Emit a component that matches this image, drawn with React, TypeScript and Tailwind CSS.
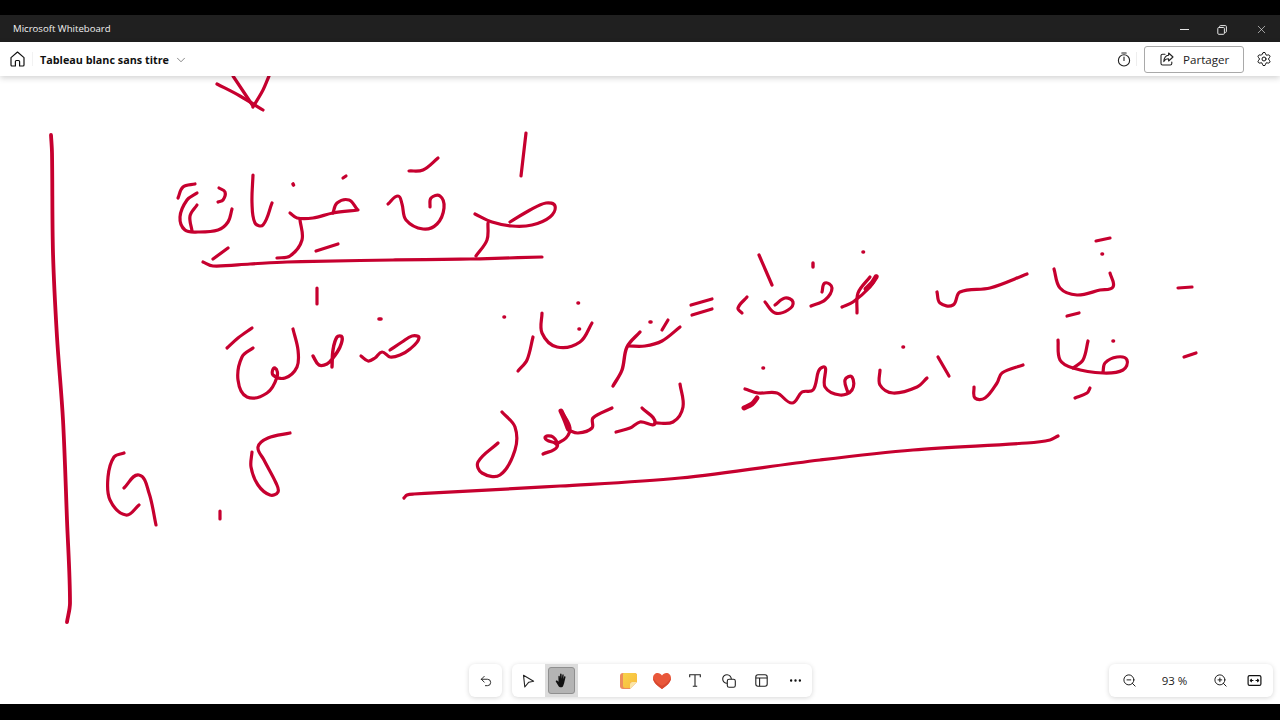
import { ChevronDown, MoreHorizontal, Settings, Undo2, X, ZoomIn, ZoomOut } from 'lucide-react';

type Stroke = { w?: number; p: number[] };

// ink strokes of the board, as point lists in page pixels (canvas starts at y=76)
const strokes: Stroke[] = [
  // arrow tip cut by the header
  { p: [217, 84, 240, 96, 263, 110] },
  { p: [233, 76, 243, 91, 253, 106] },
  { p: [269, 76, 263, 90, 253, 107] },
  // long vertical rule
  { w: 3.8, p: [51, 135, 52, 153, 53, 253, 57, 337, 63, 420, 67, 520, 70, 603, 67, 622] },
  // first heading
  { p: [526, 133, 521, 176] },
  { p: [475, 214, 492, 222, 512, 226, 532, 225, 550, 217, 555, 206, 546, 203, 530, 210, 510, 222] },
  { p: [488, 223, 487, 240, 476, 256] },
  { p: [409, 171, 423, 170, 438, 158] },
  { p: [388, 204, 398, 196, 402, 204, 406, 220, 423, 229, 437, 224, 444, 208, 440, 196, 431, 198, 430, 207] },
  { w: 3.2, p: [343, 178, 346, 176] },
  { p: [290, 213, 297, 218, 313, 218, 333, 213, 358, 210] },
  { p: [333, 213, 337, 203, 349, 200, 357, 209] },
  { p: [300, 220, 302, 240, 290, 256, 277, 258] },
  { p: [316, 251, 338, 244] },
  { w: 3.6, p: [293, 184, 293.5, 185] },
  { p: [253, 175, 252, 203, 255, 223, 263, 225, 272, 203] },
  { p: [218, 202, 223, 200, 225, 192, 219, 188] },
  { p: [178, 198, 183, 187, 195, 184] },
  { p: [197, 193, 187, 200, 180, 217, 185, 230, 198, 232, 218, 230, 228, 222, 232, 209] },
  { p: [197, 205, 190, 216, 192, 231] },
  { p: [213, 259, 228, 248] },
  { p: [203, 262, 213, 266, 250, 264, 287, 262, 393, 260, 470, 259, 542, 257] },
  // second line, left
  { p: [317, 288, 317, 304] },
  { w: 3.6, p: [379, 319, 381, 319] },
  { p: [361, 356, 368, 361, 375, 358, 382, 352, 390, 357, 400, 355, 410, 349, 419, 338, 412, 336, 402, 342, 390, 350] },
  { w: 3.4, p: [313, 356, 319, 365, 327, 364, 333, 358, 340, 347, 342, 337, 337, 337, 333, 350, 332, 367] },
  { p: [227, 348, 238, 338, 252, 328] },
  { p: [253, 348, 242, 357, 238, 380, 247, 397, 267, 393, 277, 377, 275, 368, 273, 375, 285, 378, 297, 367, 298, 350, 293, 329] },
  { p: [542, 313, 542, 333, 557, 347, 580, 342, 592, 323] },
  { p: [533, 337, 527, 360, 518, 371] },
  { w: 3.6, p: [504, 317, 504.5, 317] },
  { w: 3.6, p: [578, 303, 578.5, 303] },
  { w: 3.6, p: [579, 329, 579.5, 329] },
  { w: 3.4, p: [640, 332, 627, 347, 622, 370, 613, 386] },
  { p: [628, 346, 645, 346, 662, 341, 680, 327] },
  { w: 3.6, p: [650, 322, 651, 322] },
  { p: [662, 330, 668, 320] },
  { p: [691, 305, 712, 299] },
  { p: [692, 315, 712, 309] },
  // second line, right
  { p: [747, 297, 738, 308, 742, 313] },
  { p: [759, 255, 772, 285] },
  { p: [765, 302, 775, 313, 788, 310, 793, 302, 785, 298, 775, 305] },
  { p: [811, 306, 825, 300, 832, 288, 825, 283, 822, 292] },
  { w: 3.4, p: [813, 263, 813, 267] },
  { w: 3.6, p: [863, 252, 863.5, 252] },
  { p: [842, 307, 853, 302, 870, 287, 877, 276] },
  { w: 5, p: [866, 289, 872, 283, 876, 277] },
  { p: [870, 277, 858, 293, 857, 313] },
  { p: [937, 292, 940, 303, 953, 305, 960, 292, 990, 288, 1027, 274] },
  { p: [1054, 269, 1060, 288, 1077, 295, 1100, 290, 1113, 287, 1110, 273] },
  { p: [1096, 241, 1110, 238] },
  { w: 3.6, p: [1102, 254, 1102.5, 254] },
  { p: [1067, 316, 1079, 313] },
  { p: [1178, 288, 1192, 287] },
  // third line
  { p: [1184, 357, 1196, 353] },
  { p: [1058, 340, 1060, 360, 1073, 368, 1103, 373, 1123, 370, 1127, 360, 1117, 357, 1105, 363, 1103, 372] },
  { p: [1088, 341, 1083, 360, 1073, 368] },
  { w: 3.6, p: [1113, 341, 1113.5, 341] },
  { p: [1075, 398, 1087, 393, 1090, 388] },
  { p: [974, 387, 975, 398, 985, 398, 997, 383, 1002, 373, 1023, 365] },
  { p: [938, 357, 949, 376] },
  { p: [880, 370, 880, 385, 893, 393, 917, 387, 927, 378] },
  { w: 3.6, p: [903, 347, 903.5, 347] },
  { w: 3.6, p: [763, 368, 763.5, 368] },
  { w: 5, p: [744, 408, 752, 404, 757, 398] },
  { p: [745, 389, 758, 393, 777, 393, 792, 403, 802, 392, 813, 390, 823, 367, 825, 387, 840, 395, 852, 390, 852, 377, 845, 380, 848, 393] },
  // second row word, lower middle
  { p: [502, 412, 515, 427, 515, 450, 500, 475, 482, 473, 478, 462, 498, 443] },
  { p: [543, 454, 557, 447, 553, 437, 545, 438, 555, 443] },
  { p: [556, 444, 566, 438, 570, 428, 562, 412] },
  { w: 5, p: [561, 411, 565, 420, 568, 428] },
  { p: [568, 430, 578, 433, 592, 428, 593, 418, 612, 408] },
  { p: [616, 432, 630, 428, 640, 422, 655, 423, 642, 408] },
  { p: [655, 423, 673, 422, 683, 407, 680, 384] },
  // grade at the bottom left
  { p: [124, 453, 114, 457, 108, 477, 110, 500, 126, 515, 139, 505] },
  { p: [124, 488, 139, 475, 149, 493, 156, 525] },
  { p: [220, 511, 220, 519] },
  { p: [290, 433, 268, 438, 258, 447, 264, 460, 276, 483, 278, 492, 270, 495, 258, 485, 251, 467, 252, 452] },
  // long underline
  { w: 3.2, p: [404, 498, 407, 495, 414, 494, 560, 486, 680, 478, 820, 460, 913, 450, 1027, 443, 1050, 440, 1058, 436] },
];

function unit(x: number, y: number): [number, number] {
  const l = Math.hypot(x, y) || 1;
  return [x / l, y / l];
}

// smooth spline through the points, handle length follows each segment so long runs don't overshoot
function toPath(p: number[]) {
  const pts: [number, number][] = [];
  for (let i = 0; i < p.length; i += 2) pts.push([p[i], p[i + 1]]);
  let d = `M${pts[0][0]},${pts[0][1]}`;
  for (let i = 0; i < pts.length - 1; i++) {
    const a = pts[Math.max(i - 1, 0)];
    const b = pts[i];
    const c = pts[i + 1];
    const e = pts[Math.min(i + 2, pts.length - 1)];
    const len = Math.hypot(c[0] - b[0], c[1] - b[1]) / 3;
    const t1 = unit(c[0] - a[0], c[1] - a[1]);
    const t2 = unit(e[0] - b[0], e[1] - b[1]);
    d += ` C${b[0] + t1[0] * len},${b[1] + t1[1] * len} ${c[0] - t2[0] * len},${c[1] - t2[1] * len} ${c[0]},${c[1]}`;
  }
  return d;
}

function Ink() {
  return (
    <svg className="absolute left-0 top-[-76px]" width="1280" height="720" viewBox="0 0 1280 720" fill="none">
      {strokes.map((s, i) => (
        <path key={i} d={toPath(s.p)} stroke="#c6002f" strokeWidth={s.w ?? 3.2} strokeLinecap="round" strokeLinejoin="round" />
      ))}
    </svg>
  );
}

function HomeIcon() {
  return (
    <svg width="15" height="16" viewBox="0 0 15 16" fill="none" stroke="#111" strokeWidth="1.2" strokeLinejoin="round">
      <path d="M1 6.6 7.5 1 14 6.6V14a1 1 0 0 1-1 1H9.6V10.5a1 1 0 0 0-1-1H6.4a1 1 0 0 0-1 1V15H2a1 1 0 0 1-1-1Z" />
    </svg>
  );
}

function TimerIcon() {
  return (
    <svg width="14" height="15" viewBox="0 0 14 15" fill="none" stroke="#222" strokeWidth="1.1" strokeLinecap="round">
      <circle cx="7" cy="8.4" r="5.6" />
      <path d="M4.8 1h4.4M7 5v3.4" />
    </svg>
  );
}

function ShareIcon() {
  return (
    <svg width="14" height="14" viewBox="0 0 14 14" fill="none" stroke="#222" strokeWidth="1.1" strokeLinecap="round" strokeLinejoin="round">
      <path d="M5 2.2H2.6A1.6 1.6 0 0 0 1 3.8v7.6A1.6 1.6 0 0 0 2.6 13h7.6a1.6 1.6 0 0 0 1.6-1.6V10" />
      <path d="M8.6 1 13 5 8.6 9V6.8C6.4 6.8 4.8 7.6 3.8 9.6 4 6.2 5.8 3.6 8.6 3.3Z" />
    </svg>
  );
}

function RestoreIcon() {
  return (
    <svg width="10" height="10" viewBox="0 0 10 10" fill="none" stroke="#e5e5e5" strokeWidth="1">
      <rect x="0.8" y="2.5" width="6.6" height="6.8" rx="1" />
      <path d="M2.6 2.4V1.6a1 1 0 0 1 1-1h4.8a1 1 0 0 1 1 1v4.8a1 1 0 0 1-1 1h-.9" />
    </svg>
  );
}

function CursorIcon() {
  return (
    <svg width="13" height="14" viewBox="0 0 13 14" fill="none" stroke="#222" strokeWidth="1.1" strokeLinejoin="round">
      <path d="M1.5 1.2 11.6 7.2 6.8 8.2 2.8 13Z" />
    </svg>
  );
}

function HandIcon() {
  return (
    <svg width="13" height="15" viewBox="0 0 13 15" fill="#111">
      <path d="M3.4 3.4c0-1 1.3-1 1.4 0l.2 2.4.1-4.5c0-1 1.4-1 1.5 0l.2 4.4.5-3.7c.2-1 1.5-.8 1.4.2l-.4 4 .8-2.4c.3-.9 1.6-.5 1.4.4l-1 4.4c-.4 2-1 3.9-1.6 4.9-.3.5-.8.7-1.3.7H5.2c-.6 0-1-.3-1.4-.7L.9 8.7c-.6-.8.4-1.7 1.2-1.1l1.4 1.2Z" />
    </svg>
  );
}

function StickyIcon() {
  return (
    <svg width="17" height="16" viewBox="0 0 17 16">
      <defs>
        <linearGradient id="stickyFill" x1="0" y1="0" x2="1" y2="1">
          <stop offset="0" stopColor="#f7d34a" />
          <stop offset="1" stopColor="#f9b93c" />
        </linearGradient>
      </defs>
      <path d="M3 0h11.5A2.500 2.500 0 0 1 17 2.500V9l-7 7H3a3 3 0 0 1-3-3V3a3 3 0 0 1 3-3Z" fill="#ec8d5c" />
      <path d="M4 0h10.5A2.500 2.500 0 0 1 17 2.500V9h-5a2 2 0 0 0-2 2v4H5a2 2 0 0 1-2-2V1a1 1 0 0 1 1-1Z" fill="url(#stickyFill)" />
      <path d="M17 9l-7 7v-4.500A2.500 2.500 0 0 1 12.5 9Z" fill="#fbe6a6" />
    </svg>
  );
}

function HeartIcon() {
  return (
    <svg width="18" height="16" viewBox="0 0 18 16">
      <path d="M9 16C4.5 12.600 0 9.200 0 4.900 0 2.100 2.100 0 4.700 0 6.400 0 8 .9 9 2.500 10 .9 11.600 0 13.300 0 15.900 0 18 2.100 18 4.900 18 9.200 13.500 12.600 9 16Z" fill="#e9573a" />
      <path d="M9 16C4.500 12.600 0 9.200 0 4.900c3 4 6 6.600 9 7.800 3-1.200 6-3.800 9-7.800 0 4.300-4.500 7.700-9 11.100Z" fill="#d8482f" />
    </svg>
  );
}

function SerifT() {
  return (
    <svg width="12" height="13" viewBox="0 0 12 13" fill="none" stroke="#222" strokeWidth="1.1">
      <path d="M.7 3.2V.7h10.600v2.500M6 .7v11.600M3.800 12.300h4.400" />
    </svg>
  );
}

function ShapesIcon() {
  return (
    <svg width="14" height="14" viewBox="0 0 14 14" fill="none" stroke="#222" strokeWidth="1.1">
      <path d="M5.200 9.300A4.300 4.300 0 1 1 9.300 5.200" />
      <rect x="5.3" y="5.3" width="8" height="8" rx="1.8" />
    </svg>
  );
}

function TemplateIcon() {
  return (
    <svg width="13" height="13" viewBox="0 0 13 13" fill="none" stroke="#222" strokeWidth="1.1">
      <rect x="0.8" y="0.8" width="11.4" height="11.4" rx="2.2" />
      <path d="M.8 4h11.400M4.600 4v8.200" />
    </svg>
  );
}

function FitIcon() {
  return (
    <svg width="15" height="11" viewBox="0 0 14 11" fill="none" stroke="#111" strokeWidth="1.2" strokeLinecap="round" strokeLinejoin="round">
      <rect x="0.6" y="0.6" width="12.8" height="9.8" rx="1.5" />
      <path d="M3 5.500h2.500M3.900 4.300 2.900 5.500l1 1.200M11 5.500H8.500M10.100 4.300l1 1.200-1 1.200" />
    </svg>
  );
}

function ToolSlot({ children }: { children?: React.ReactNode }) {
  return <div className="flex h-[33px] w-[33.33px] items-center justify-center">{children}</div>;
}

export default function App() {
  return (
    <div className="flex h-[720px] w-[1280px] flex-col overflow-hidden bg-white font-['Open_Sans','Noto_Sans',sans-serif]">
      <div className="h-[15px] bg-black" />

      {/* window title bar */}
      <div className="flex h-[27px] items-center bg-[#202020] pl-[13px] text-[9.6px] text-[#f0f0f0]">
        <span className="pt-[2px]">Microsoft Whiteboard</span>
        <div className="ml-auto flex items-center pt-[2px]">
          <div className="mr-[28px] h-px w-[9px] bg-[#e5e5e5]" />
          <div className="mr-[28px]"><RestoreIcon /></div>
          <div className="mr-[12px]"><X size={13} color="#e5e5e5" strokeWidth={1.2} /></div>
        </div>
      </div>

      {/* app header */}
      <div className="relative z-10 flex h-[34px] items-center bg-white pl-[10px] shadow-[0_2px_6px_rgba(0,0,0,0.18)]">
        <HomeIcon />
        <div className="ml-[7px] h-[14px] w-px bg-[#f2f2f2]" />
        <span className="ml-[7px] pt-[2px] text-[10.8px] font-bold text-[#111]">Tableau blanc sans titre</span>
        <ChevronDown className="ml-[5px] mt-[1px]" size={14} color="#555" strokeWidth={1.2} />
        <div className="ml-auto flex items-center">
          <TimerIcon />
          <div className="ml-[5px] h-[14px] w-px bg-[#eeeeee]" />
          <button className="ml-[7px] flex h-[27px] w-[100px] items-center rounded-[3px] border border-[#a9a9a9] pl-[15px] text-[11.6px] text-[#222]">
            <ShareIcon />
            <span className="ml-[9px] pt-[2px]">Partager</span>
          </button>
          <Settings className="ml-[12px] mr-[8px]" size={16} color="#111" strokeWidth={1.5} />
        </div>
      </div>

      {/* board */}
      <div className="relative flex-1 bg-white">
        <Ink />
        <div className="absolute bottom-[7px] left-[469px] flex items-end">
          <div className="flex h-[33px] w-[33px] items-center justify-center rounded-[6px] bg-white shadow-[0_1px_5px_rgba(0,0,0,0.16)]">
            <Undo2 size={14} color="#111" strokeWidth={1.5} />
          </div>
          <div className="ml-[10px] flex h-[33px] w-[300px] items-center rounded-[6px] bg-white shadow-[0_1px_5px_rgba(0,0,0,0.16)]">
            <ToolSlot><CursorIcon /></ToolSlot>
            <ToolSlot>
              <div className="flex h-[33px] w-[33px] items-center justify-center bg-[#dcdcdc]">
                <div className="flex h-[27px] w-[27px] items-center justify-center rounded-[3px] border border-[#8f8f8f] bg-[#b4b4b4]">
                  <HandIcon />
                </div>
              </div>
            </ToolSlot>
            <ToolSlot />
            <ToolSlot><StickyIcon /></ToolSlot>
            <ToolSlot><HeartIcon /></ToolSlot>
            <ToolSlot><SerifT /></ToolSlot>
            <ToolSlot><ShapesIcon /></ToolSlot>
            <ToolSlot><TemplateIcon /></ToolSlot>
            <ToolSlot><MoreHorizontal size={15} color="#111" strokeWidth={1.8} /></ToolSlot>
          </div>
          <div className="ml-[297px] flex h-[33px] w-[164px] items-center rounded-[6px] bg-white pl-[13px] shadow-[0_1px_5px_rgba(0,0,0,0.16)]">
            <ZoomOut size={15} color="#111" strokeWidth={1.5} />
            <span className="ml-[24px] w-[27px] whitespace-nowrap pt-[1px] text-center text-[11.5px] text-[#222]">93 %</span>
            <ZoomIn className="ml-[25px]" size={15} color="#111" strokeWidth={1.5} />
            <div className="ml-[19px]"><FitIcon /></div>
          </div>
        </div>
      </div>

      <div className="h-4 bg-black" />
    </div>
  );
}
